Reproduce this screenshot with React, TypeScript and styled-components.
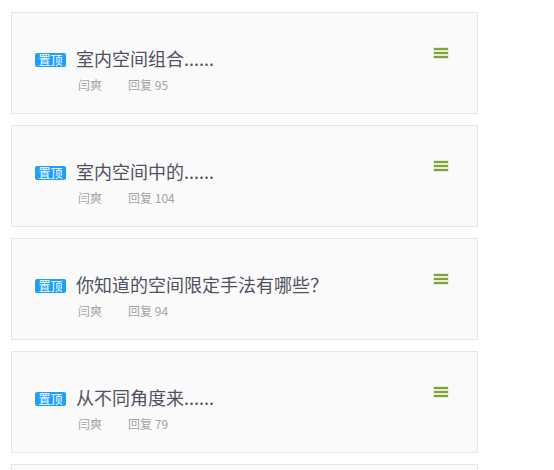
import React from 'react';
import styled, { createGlobalStyle } from 'styled-components';

interface Topic {
    id: number;
    title: string;
    author: string;
    replies: number;
}

const topics: Topic[] = [
    { id: 1, title: '室内空间组合......', author: '闫爽', replies: 95 },
    { id: 2, title: '室内空间中的......', author: '闫爽', replies: 104 },
    { id: 3, title: '你知道的空间限定手法有哪些？', author: '闫爽', replies: 94 },
    { id: 4, title: '从不同角度来......', author: '闫爽', replies: 79 },
    { id: 5, title: '', author: '', replies: 0 },
];

const GlobalStyle = createGlobalStyle`
    body {
        margin: 0;
        background: #ffffff;
        font-family: "Noto Sans CJK SC", "Noto Sans", sans-serif;
    }
`;

export default function App() {
    return (
        <>
            <GlobalStyle />
            <TopicList>
                {topics.map((topic) => (
                    <TopicCard key={topic.id}>
                        {topic.title && (
                            <>
                                <HeadRow>
                                    <TitleWrap>
                                        <TopBadge>置顶</TopBadge>
                                        <Title>{topic.title}</Title>
                                    </TitleWrap>
                                    <MenuIcon>
                                        <Bar />
                                        <Bar />
                                        <Bar />
                                    </MenuIcon>
                                </HeadRow>
                                <Meta>
                                    <span>{topic.author}</span>
                                    <span>回复 {topic.replies}</span>
                                </Meta>
                            </>
                        )}
                    </TopicCard>
                ))}
            </TopicList>
        </>
    );
}

const TopicList = styled.div`
    display: flex;
    flex-direction: column;
    gap: 11px;
    padding: 12px 0 0 11px;
    height: 470px;
    overflow: hidden;
    box-sizing: border-box;
`;

const TopicCard = styled.div`
    flex: none;
    width: 467px;
    height: 102px;
    box-sizing: border-box;
    background: #fafafa;
    border: 1px solid #e6e6e6;
    padding: 34px 29px 0 23px;
`;

const HeadRow = styled.div`
    display: flex;
    justify-content: space-between;
    align-items: flex-start;
`;

const TitleWrap = styled.div`
    display: flex;
    align-items: center;
    height: 26px;
`;

const TopBadge = styled.span`
    display: inline-flex;
    align-items: center;
    justify-content: center;
    width: 31px;
    height: 14px;
    border-radius: 2px;
    background: #1e9fff;
    color: #ffffff;
    font-size: 12px;
    line-height: 14px;
    margin-right: 10px;
`;

const Title = styled.span`
    font-size: 18px;
    line-height: 26px;
    margin-bottom: 4px;
    color: #50525e;
`;

const MenuIcon = styled.span`
    display: flex;
    flex-direction: column;
    gap: 2px;
    width: 14px;
    padding-top: 1px;
`;

const Bar = styled.span`
    display: block;
    height: 2px;
    background: #7fa335;
    box-shadow: 0 0 0 0.5px rgba(127, 163, 53, 0.35);
`;

const Meta = styled.div`
    display: flex;
    gap: 26px;
    margin: 3px 0 0 43px;
    font-size: 12px;
    line-height: 18px;
    color: #a3a3a3;
`;
